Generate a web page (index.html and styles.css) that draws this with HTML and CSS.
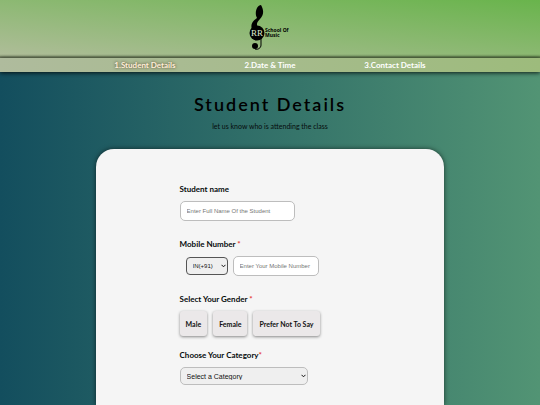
FILE: index.html
```html
<!DOCTYPE html>
<html lang="en">
<head>
<meta charset="utf-8">
<meta name="viewport" content="width=device-width, initial-scale=1">
<title>Student Details</title>
<link rel="stylesheet" href="styles.css">
</head>
<body>
<header class="header">
  <svg class="logo" viewBox="0 0 48 48" role="img" aria-label="RR School Of Music">
    <path d="M6 25C4 20 7 17 11 14C8 9 11 1 15 1C18 6 18 11 14 15C11 18 10 20 12 24Z"/>
    <circle cx="11" cy="29" r="7.500"/>
    <circle cx="9" cy="42" r="3"/>
    <path d="M15 35V41C15 44 12 46 9 45" fill="none" stroke="#000"/>
    <text class="logo-initials" x="5" y="32">RR</text>
    <text class="logo-name" x="19" y="28">School Of</text>
    <text class="logo-name" x="19" y="33">Music</text>
  </svg>
</header>
<nav class="steps" aria-label="Steps">
  <a class="step step-current" href="#student" aria-current="step">1.Student Details</a>
  <a class="step" href="#date">2.Date &amp; Time</a>
  <a class="step" href="#contact">3.Contact Details</a>
</nav>
<main class="main" id="student">
  <h1 class="title">Student Details</h1>
  <p class="subtitle">let us know who is attending the class</p>
  <form class="card">
    <div class="field">
      <label class="label" for="name">Student name</label>
      <input class="input input-name" id="name" type="text" placeholder="Enter Full Name Of the Student">
    </div>
    <div class="field">
      <label class="label" for="mobile">Mobile Number <span class="required">*</span></label>
      <div class="phone">
        <div class="picker picker-code">
          <select class="select select-code" aria-label="Country code"><option>IN(+91)</option></select>
          <svg class="chevron" viewBox="0 0 5 4" aria-hidden="true"><path d="M.5 .8L2.500 2.800L4.500 .8"/></svg>
        </div>
        <input class="input input-mobile" id="mobile" type="tel" placeholder="Enter Your Mobile Number">
      </div>
    </div>
    <div class="field field-choices" role="group" aria-labelledby="gender">
      <span class="label" id="gender">Select Your Gender <span class="required">*</span></span>
      <div class="choices">
        <button class="choice" type="button">Male</button>
        <button class="choice" type="button">Female</button>
        <button class="choice" type="button">Prefer Not To Say</button>
      </div>
    </div>
    <div class="field">
      <label class="label" for="category">Choose Your Category<span class="required">*</span></label>
      <div class="picker picker-category">
        <select class="select" id="category"><option>Select a Category</option></select>
        <svg class="chevron" viewBox="0 0 5 4" aria-hidden="true"><path d="M.5 .8L2.500 2.800L4.500 .8"/></svg>
      </div>
    </div>
  </form>
</main>
</body>
</html>
```

FILE: styles.css
```css
* {
  box-sizing: border-box;
}

body {
  display: flex;
  flex-direction: column;
  margin: 0;
  min-height: 100vh;
  font-family: Lato, sans-serif;
  color: #050b0b;
  background: linear-gradient(to right, #134e5e, #529474);
}

.header {
  display: flex;
  justify-content: center;
  height: 58px;
  padding-top: 4px;
  background: linear-gradient(to top right, #b0bd9a, #69b44c);
  box-shadow: inset 0 -4px 2px -2px rgba(30, 45, 20, 0.5);
}

.logo {
  width: 48px;
  height: 48px;
}

.logo-initials {
  font: 9px "Liberation Serif", serif;
  fill: #dcebcf;
}

.logo-name {
  font: bold 5px "Noto Sans", sans-serif;
}

.steps {
  position: relative;
  display: grid;
  grid-template-columns: repeat(3, 125px);
  justify-content: center;
  align-items: center;
  height: 14px;
  background: linear-gradient(to right, #afbb9d, #9dbb7c);
  box-shadow: 0 1px 4px rgba(0, 0, 0, 0.8);
}

.step {
  font-size: 8px;
  line-height: 14px;
  font-weight: 700;
  text-align: center;
  text-decoration: none;
  color: #fff;
}

.step-current {
  color: #ffeed8;
  text-shadow: 0 0 3px #4d3820;
}

.main {
  display: flex;
  flex: 1;
  flex-direction: column;
  padding-top: 19px;
}

.title {
  margin: 0;
  font-size: 18px;
  line-height: 26px;
  font-weight: 600;
  text-align: center;
  letter-spacing: 2px;
  color: #000;
}

.subtitle {
  margin: 4px 0 18px;
  font-size: 7px;
  line-height: 10px;
  text-align: center;
}

.card {
  flex: 1;
  width: 64.600%;
  margin: 0 auto;
  padding: 34px 24px 4px 84px;
  border-radius: 18px 18px 0 0;
  background: #f5f5f5;
  box-shadow: 0 0 5px rgba(0, 0, 0, 0.6);
}

.field {
  display: flex;
  flex-direction: column;
  align-items: flex-start;
  gap: 6px;
  margin-bottom: 17px;
}

.field-choices {
  margin-bottom: 13px;
}

.field:last-child {
  margin-bottom: 0;
}

.label {
  font-size: 8px;
  line-height: 12px;
  font-weight: 700;
}

.required {
  color: #e53935;
}

.input,
.select {
  margin: 0;
  font-family: "Liberation Sans", sans-serif;
  border: 1px solid #bdbdbd;
  border-radius: 5px;
}

.input {
  height: 20px;
  padding: 0 6px;
  font-size: 6px;
  background: #fff;
}

.input::placeholder {
  color: #757575;
}

.input-name {
  width: 115px;
}

.input-mobile {
  width: 86px;
}

.picker {
  position: relative;
}

.picker-code {
  width: 42px;
}

.picker-category {
  width: 128px;
}

.select {
  display: block;
  appearance: none;
  width: 100%;
  height: 18px;
  padding: 0 6px;
  font-size: 7px;
  color: #111;
  background: #efefef;
}

.select-code {
  font-size: 6px;
  border-color: #555;
  border-radius: 4px;
}

.chevron {
  position: absolute;
  top: 7px;
  right: 2px;
  width: 5px;
  height: 4px;
  fill: none;
  stroke: #111;
  pointer-events: none;
}

.phone {
  display: flex;
  align-items: center;
  gap: 5px;
  padding-left: 6px;
}

.choices {
  display: flex;
  gap: 6px;
}

.choice {
  height: 25px;
  padding: 0 6px;
  font-family: inherit;
  font-size: 7px;
  font-weight: 700;
  color: #111;
  border: 0;
  border-radius: 3px;
  background: #ebe8e9;
  box-shadow: 0 1px 3px rgba(0, 0, 0, 0.45);
}
```
